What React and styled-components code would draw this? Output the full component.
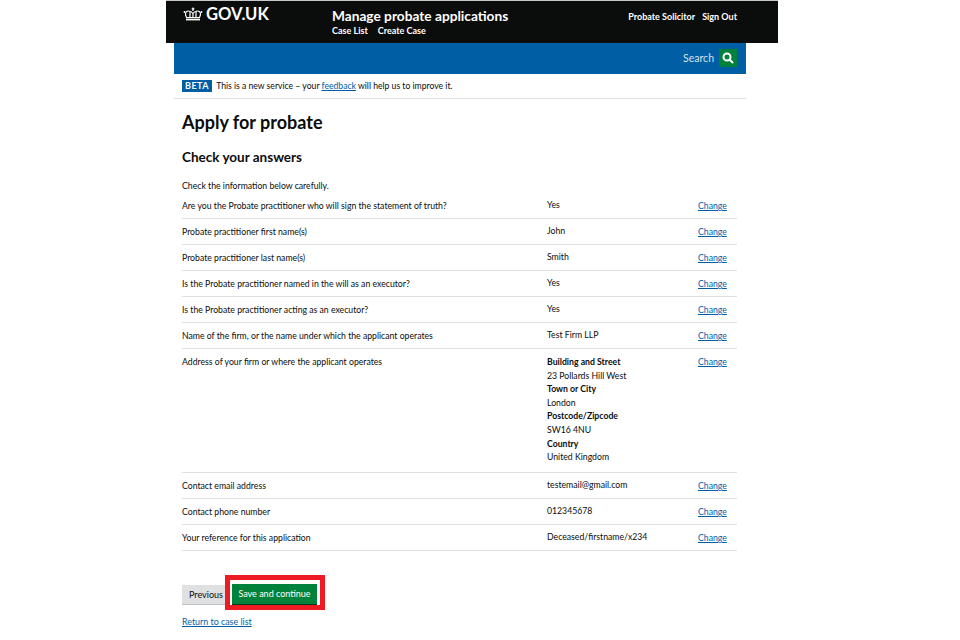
import React from "react";
import styled, { createGlobalStyle } from "styled-components";

const GlobalStyle = createGlobalStyle`
  html, body {
    margin: 0;
    padding: 0;
    background: #fff;
  }
  body {
    font-family: Lato, "Noto Sans", "Liberation Sans", sans-serif;
    color: #0b0c0c;
  }
`;

const Page = styled.div`
  width: 960px;
  height: 640px;
  overflow: hidden;
  padding-left: 166px;
  box-sizing: border-box;
`;

const Header = styled.header`
  width: 612px;
  height: 42px;
  border-top: 1px solid #c8c8c8;
  background: #0b0c0c;
  color: #fff;
  display: flex;
  align-items: flex-start;
`;

const Logo = styled.div`
  width: 149px;
  margin-left: 17px;
  margin-top: 3px;
  display: flex;
  align-items: center;
  gap: 3px;
  font-size: 16.6px;
  line-height: 20px;
  font-weight: 700;
`;

const ServiceBlock = styled.div`
  margin-top: 7px;
  flex: 1;
`;

const ServiceName = styled.div`
  font-size: 13.7px;
  line-height: 16px;
  font-weight: 700;
`;

const ServiceNav = styled.nav`
  display: flex;
  gap: 10px;
  margin-top: 1px;
  font-size: 9px;
  line-height: 12px;
  font-weight: 700;
`;

const UserNav = styled.nav`
  display: flex;
  gap: 7px;
  margin: 10px 41px 0 0;
  font-size: 9px;
  line-height: 12px;
  font-weight: 700;
`;

const Main = styled.main`
  width: 572px;
  margin-left: 8px;
`;

const SearchBar = styled.div`
  height: 30px;
  background: #005ea5;
  display: flex;
  align-items: center;
  justify-content: flex-end;
  gap: 5px;
  padding: 0 9px 1px 0;
  color: #d5e4f0;
  font-size: 10.5px;
`;

const SearchButton = styled.span`
  width: 18px;
  height: 18px;
  background: #00823b;
  display: flex;
  align-items: center;
  justify-content: center;
`;

const BetaRow = styled.div`
  height: 25px;
  box-sizing: border-box;
  border-bottom: 1px solid #dee0e2;
  display: flex;
  align-items: center;
  padding: 0 0 1px 8px;
  font-size: 8.65px;
  color: #0b0c0c;
`;

const BetaTag = styled.strong`
  background: #005ea5;
  color: #fff;
  font-size: 9px;
  line-height: 12px;
  letter-spacing: 0.5px;
  padding: 0 3px;
  margin-right: 4px;
`;

const TextLink = styled.a`
  color: #005ea5;
  text-decoration: underline;
`;

const Content = styled.div`
  padding: 0 9px 0 8px;
`;

const Title = styled.h1`
  margin: 12px 0 0;
  font-size: 18px;
  line-height: 22px;
  font-weight: 700;
`;

const Subtitle = styled.h2`
  margin: 15px 0 0;
  font-size: 13.5px;
  line-height: 18px;
  font-weight: 700;
`;

const Intro = styled.p`
  margin: 14px 0 0;
  font-size: 8.7px;
  line-height: 12px;
`;

const AnswerList = styled.div`
  margin-top: 1px;
`;

const Row = styled.div`
  display: grid;
  grid-template-columns: 365px 151px 1fr;
  border-bottom: 1px solid #dee0e2;
  padding: 7px 0 6px;
  font-size: 8.7px;
  line-height: 12px;
`;

const Value = styled.div`
  margin-top: -1px;
  margin-bottom: ${(p) => (p.$address ? "2.2px" : "0")};
  line-height: ${(p) => (p.$address ? "13.6px" : "12px")};
`;

const AddressLabel = styled.div`
  font-weight: 700;
`;

const Actions = styled.div`
  display: flex;
  align-items: flex-start;
  margin-top: 24px;
  font-size: 9px;
`;

const PreviousButton = styled.button`
  width: 48px;
  height: 20px;
  margin-top: 10px;
  margin-right: -5px;
  padding: 0;
  border: 0;
  border-bottom: 1px solid #bfc1c3;
  background: #dee0e2;
  color: #0b0c0c;
  font: inherit;
`;

const Highlight = styled.span`
  display: inline-flex;
  border: 5px solid #ed1c24;
  padding: 4px 3px 0 2px;
  background: #fff;
`;

const SaveButton = styled.button`
  width: 85px;
  height: 21px;
  padding: 0;
  border: 0;
  border-bottom: 1px solid #003618;
  background: #00823b;
  color: #fff;
  font: inherit;
`;

const ReturnRow = styled.div`
  margin-top: 6px;
  font-size: 8.9px;
  line-height: 12px;
`;

const answers = [
  ["Are you the Probate practitioner who will sign the statement of truth?", "Yes"],
  ["Probate practitioner first name(s)", "John"],
  ["Probate practitioner last name(s)", "Smith"],
  ["Is the Probate practitioner named in the will as an executor?", "Yes"],
  ["Is the Probate practitioner acting as an executor?", "Yes"],
  ["Name of the firm, or the name under which the applicant operates", "Test Firm LLP"],
  [
    "Address of your firm or where the applicant operates",
    [
      ["Building and Street", "23 Pollards Hill West"],
      ["Town or City", "London"],
      ["Postcode/Zipcode", "SW16 4NU"],
      ["Country", "United Kingdom"],
    ],
  ],
  ["Contact email address", "testemail@gmail.com"],
  ["Contact phone number", "012345678"],
  ["Your reference for this application", "Deceased/firstname/x234"],
];

const Crown = () => (
  <svg width="20" height="14" viewBox="0 0 20 14" fill="none" stroke="#fff" strokeWidth="1.200">
    <path d="M3.500 10.500C1.500 7 2.500 4 5.500 4 7.500 4 9 5 10 6.500 11 5 12.500 4 14.500 4 17.500 4 18.500 7 16.500 10.500Z" />
    <path d="M7 4.500v6M10 6.500v4M13 4.500v6" />
    <path d="M3 12.500h14" strokeWidth="1.800" />
    <path d="M10 .5v3.500M8.700 1.800h2.600" />
    <circle cx="1.500" cy="5" r=".9" fill="#fff" stroke="none" />
    <circle cx="18.500" cy="5" r=".9" fill="#fff" stroke="none" />
  </svg>
);

const SearchIcon = () => (
  <svg width="12" height="12" viewBox="0 0 12 12" fill="none" stroke="#fff" strokeWidth="2">
    <circle cx="5" cy="5" r="3.500" />
    <path d="M7.500 7.500 11 11" />
  </svg>
);

const App = () => (
  <Page>
    <GlobalStyle />
    <Header>
      <Logo>
        <Crown />
        GOV.UK
      </Logo>
      <ServiceBlock>
        <ServiceName>Manage probate applications</ServiceName>
        <ServiceNav>
          <span>Case List</span>
          <span>Create Case</span>
        </ServiceNav>
      </ServiceBlock>
      <UserNav>
        <span>Probate Solicitor</span>
        <span>Sign Out</span>
      </UserNav>
    </Header>
    <Main>
      <SearchBar>
        Search
        <SearchButton>
          <SearchIcon />
        </SearchButton>
      </SearchBar>
      <BetaRow>
        <BetaTag>BETA</BetaTag>
        <span>
          This is a new service – your <TextLink href="#">feedback</TextLink> will help us to
          improve it.
        </span>
      </BetaRow>
      <Content>
        <Title>Apply for probate</Title>
        <Subtitle>Check your answers</Subtitle>
        <Intro>Check the information below carefully.</Intro>
        <AnswerList>
          {answers.map(([label, value]) => (
            <Row key={label}>
              <div>{label}</div>
              {Array.isArray(value) ? (
                <Value $address>
                  {value.map(([name, text]) => (
                    <React.Fragment key={name}>
                      <AddressLabel>{name}</AddressLabel>
                      <div>{text}</div>
                    </React.Fragment>
                  ))}
                </Value>
              ) : (
                <Value>{value}</Value>
              )}
              <div>
                <TextLink href="#">Change</TextLink>
              </div>
            </Row>
          ))}
        </AnswerList>
        <Actions>
          <PreviousButton>Previous</PreviousButton>
          <Highlight>
            <SaveButton>Save and continue</SaveButton>
          </Highlight>
        </Actions>
        <ReturnRow>
          <TextLink href="#">Return to case list</TextLink>
        </ReturnRow>
      </Content>
    </Main>
  </Page>
);

export default App;
